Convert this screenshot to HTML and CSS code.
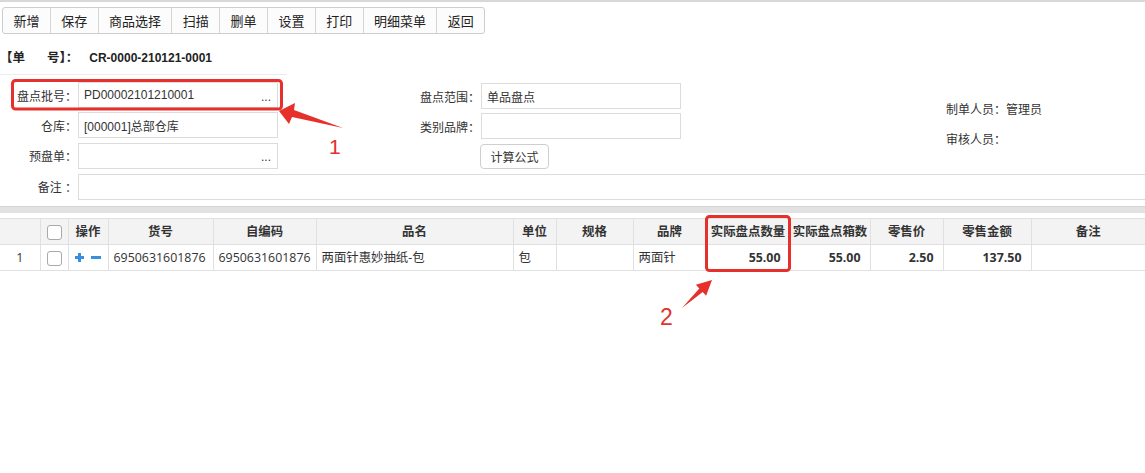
FILE: index.html
```html
<!DOCTYPE html>
<html lang="zh-CN">
<head>
<meta charset="utf-8">
<title>盘点单</title>
<link rel="stylesheet" href="styles.css">
</head>
<body>
<div class="topline"></div>
<div class="toolbar">
  <button class="tb">新增</button>
  <button class="tb">保存</button>
  <button class="tb">商品选择</button>
  <button class="tb">扫描</button>
  <button class="tb">删单</button>
  <button class="tb">设置</button>
  <button class="tb">打印</button>
  <button class="tb">明细菜单</button>
  <button class="tb">返回</button>
</div>
<div class="billno"><span class="bk">【单</span><span class="bk gap">号】：</span><span class="no">CR-0000-210121-0001</span></div>
<div class="faint"></div>
<div class="form">
  <div class="form-top">
    <div class="col col1">
      <div class="field"><span class="lbl">盘点批号：</span><div class="input">PD00002101210001<span class="dots">...</span></div></div>
      <div class="field"><span class="lbl">仓库：</span><div class="input">[000001]总部仓库</div></div>
      <div class="field"><span class="lbl">预盘单：</span><div class="input"><span></span><span class="dots">...</span></div></div>
    </div>
    <div class="col col2">
      <div class="field"><span class="lbl lbl2">盘点范围：</span><div class="input">单品盘点</div></div>
      <div class="field"><span class="lbl lbl2">类别品牌：</span><div class="input"></div></div>
      <div class="field"><button class="calc">计算公式</button></div>
    </div>
    <div class="col col3">
      <div class="info">制单人员：管理员</div>
      <div class="info">审核人员：</div>
    </div>
  </div>
  <div class="field remark"><span class="lbl">备注 ：</span><div class="input wide"></div></div>
</div>
<div class="band"></div>
<table class="grid">
  <colgroup>
    <col style="width:40px"><col style="width:28px"><col style="width:40px"><col style="width:105px"><col style="width:103px"><col style="width:197px"><col style="width:43px"><col style="width:77px"><col style="width:73px"><col style="width:84px"><col style="width:80px"><col style="width:73px"><col style="width:88px"><col style="width:114px">
  </colgroup>
  <thead>
    <tr>
      <th class="first"></th>
      <th><span class="cb"></span></th>
      <th>操作</th>
      <th>货号</th>
      <th>自编码</th>
      <th>品名</th>
      <th>单位</th>
      <th>规格</th>
      <th>品牌</th>
      <th>实际盘点数量</th>
      <th>实际盘点箱数</th>
      <th>零售价</th>
      <th>零售金额</th>
      <th class="last">备注</th>
    </tr>
  </thead>
  <tbody>
    <tr>
      <td class="first c">1</td>
      <td class="c"><span class="cb"></span></td>
      <td class="c ops"><svg class="ic" width="9" height="9" viewBox="0 0 9 9"><path d="M0 4.5H9M4.5 0V9" stroke="#3a8fdc" stroke-width="3"/></svg><svg class="ic" width="10" height="9" viewBox="0 0 10 9"><path d="M0 4.5H10" stroke="#3a8fdc" stroke-width="3"/></svg></td>
      <td>6950631601876</td>
      <td>6950631601876</td>
      <td>两面针惠妙抽纸-包</td>
      <td>包</td>
      <td></td>
      <td>两面针</td>
      <td class="num">55.00</td>
      <td class="num">55.00</td>
      <td class="num">2.50</td>
      <td class="num">137.50</td>
      <td class="last"></td>
    </tr>
  </tbody>
</table>
<svg class="annot" width="1145" height="473" viewBox="0 0 1145 473">
  <rect x="12.5" y="80.5" width="269" height="28.5" rx="3" fill="none" stroke="#e6302b" stroke-width="3"/>
  <polygon points="279,111 295,103 294,110 343,128 292,117 289,124" fill="#e6302b"/>
  <text x="329" y="153.5" class="anum n1">1</text>
  <rect x="706.5" y="216.5" width="83" height="54" rx="3" fill="none" stroke="#e6302b" stroke-width="3"/>
  <polygon points="712,280 695.9,284.7 699.3,288.4 682,308 702.7,292 706.1,295.7" fill="#e6302b"/>
  <text x="660" y="325" class="anum n2">2</text>
</svg>
</body>
</html>
```
FILE: styles.css
```css
* { box-sizing: border-box; }
html, body { margin: 0; padding: 0; }
body {
  width: 1145px;
  height: 473px;
  overflow: hidden;
  position: relative;
  background: #fff;
  color: #333;
  font-family: "Liberation Sans", "Noto Sans CJK SC", sans-serif;
  font-size: 12px;
}
.topline { height: 2px; background: #d8d8d8; }
.toolbar {
  display: flex;
  width: max-content;
  margin: 5px 0 0 2px;
  height: 27px;
  border: 1px solid #cdcdcd;
  border-radius: 3px;
  background: #fcfcfc;
}
.tb {
  font-family: "Noto Sans CJK SC", sans-serif;
  font-size: 13px;
  color: #222;
  background: transparent;
  border: 0;
  border-left: 1px solid #d6d6d6;
  padding: 0 10.4px;
  height: 25px;
  line-height: 25px;
  margin: 0;
}
.tb:first-child { border-left: 0; }
.billno {
  margin-top: 13px;
  height: 20px;
  line-height: 20px;
  font-weight: bold;
  color: #222;
  padding-left: 0;
}
.bk { font-family: "Noto Sans CJK SC", sans-serif; font-size: 12.5px; }
.gap { margin-left: 22px; }
.no { font-size: 12px; margin-left: 11px; }
.faint { margin-top: 7px; width: 287px; height: 1px; background: #ececec; }
.form { margin-top: 7px; }
.form-top { display: flex; }
.col1 { width: 278px; }
.col2 { margin-left: 116px; width: 287px; padding-top: 1px; }
.col3 { margin-left: 0; padding-left: 265px; padding-top: 15px; }
.field { display: flex; align-items: center; height: 26px; margin-bottom: 4.33px; }
.lbl { width: 77px; margin-right: 1px; text-align: right; white-space: nowrap; color: #333; }
.lbl2 { width: 86px; }
.input {
  width: 200px;
  height: 26px;
  border: 1px solid #dcdcdc;
  padding: 0 6px 0 5px;
  display: flex;
  align-items: center;
  justify-content: space-between;
  color: #333;
  white-space: nowrap;
}
.dots { padding-top: 3px; }
.calc {
  margin-left: 86px;
  height: 25px;
  width: 69px;
  padding: 0;
  border: 1px solid #cfcfcf;
  border-radius: 4px;
  background: #fff;
  color: #333;
  font-family: "Noto Sans CJK SC", sans-serif;
  font-size: 12px;
}
.info { height: 30.33px; line-height: 26px; white-space: nowrap; color: #333; }
.remark { margin-bottom: 0; }
.input.wide { flex: 1; margin-right: -4px; height: 25.5px; }
.band {
  margin-top: 6px;
  height: 7px;
  background: #e2e2e2;
  border-top: 1px solid #d4d4d4;
}
.grid {
  margin-top: 5px;
  border-collapse: collapse;
  table-layout: fixed;
  width: 1145px;
  font-family: "Open Sans", "Noto Sans CJK SC", sans-serif;
  font-size: 12.4px;
  color: #333;
}
.grid th, .grid td {
  height: 26px;
  padding: 0 5px;
  border: 1px solid #e0e0e0;
  white-space: nowrap;
  overflow: hidden;
  text-align: left;
  vertical-align: middle;
}
.grid th {
  background: #f3f3f3;
  font-weight: bold;
  text-align: center;
  color: #333;
  padding: 0 2px;
}
.grid .first { border-left: 0; }
.grid .last { border-right: 0; }
.grid .c { text-align: center; padding: 0; }
.grid .num { text-align: right; font-weight: bold; padding-right: 9px; }
.cb {
  display: inline-block;
  width: 15px;
  height: 15px;
  border: 1px solid #a9a9a9;
  border-radius: 3px;
  background: #fff;
  vertical-align: middle;
}
.ops { font-size: 0; }
.ic { display: inline-block; vertical-align: middle; }
.ic + .ic { margin-left: 7px; }
.annot { position: absolute; left: 0; top: 0; pointer-events: none; }
.anum { font-family: "Liberation Sans", sans-serif; fill: #e6302b; }
.n1 { font-size: 21px; }
.n2 { font-size: 23px; }
```
